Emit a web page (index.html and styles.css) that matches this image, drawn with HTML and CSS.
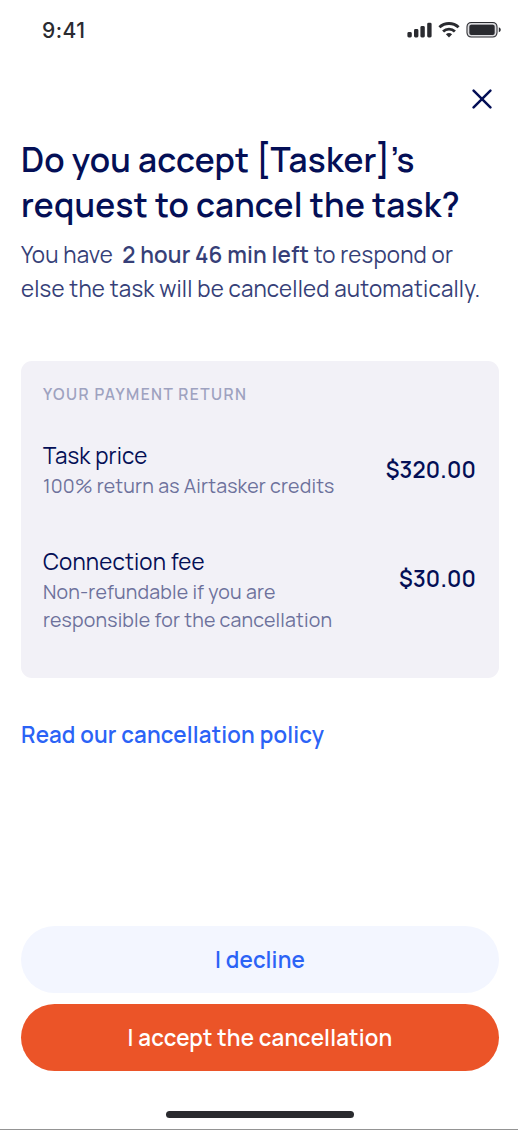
FILE: index.html
```html
<!DOCTYPE html>
<html lang="en">
<head>
    <meta charset="UTF-8">
    <meta name="viewport" content="width=device-width, initial-scale=1.0">
    <title>Cancellation request</title>
    <link rel="stylesheet" href="styles.css">
</head>
<body>
    <div class="screen">
        <div class="status-bar">
            <span class="time">9:41</span>
            <svg class="status-icons" width="96" height="18" viewBox="0 0 96 18" fill="#2a2b30">
                <!-- signal -->
                <rect x="0.4" y="11" width="4.4" height="5.4" rx="1.4"/>
                <rect x="7" y="8" width="4.4" height="8.4" rx="1.4"/>
                <rect x="13.4" y="5" width="4.4" height="11.4" rx="1.4"/>
                <rect x="20.2" y="1.7" width="4.4" height="14.7" rx="1.4"/>
                <!-- wifi -->
                <g fill="none" stroke="#2a2b30" stroke-width="2.9">
                    <path d="M32.4 6.3a14.2 14.2 0 0 1 19.2 0"/>
                    <path d="M36.1 10.5a8.6 8.6 0 0 1 11.8 0"/>
                </g>
                <path d="M38.9 13.3a4.6 4.6 0 0 1 6.2 0L42 16.5z"/>
                <!-- battery -->
                <rect x="60" y="1.5" width="30" height="14.5" rx="4.2" fill="#b5b5b9" stroke="#2a2b30" stroke-width="1.1"/>
                <rect x="61.3" y="2.8" width="27.4" height="11.9" rx="3" fill="none" stroke="#e8e8ea" stroke-width="1"/>
                <rect x="62.4" y="3.7" width="25.2" height="10.2" rx="2"/>
                <path d="M91.8 6.3c2.6.8 2.6 4.2 0 5z"/>
            </svg>
        </div>

        <div class="close-row">
            <button class="close" aria-label="Close">
                <svg width="20" height="20" viewBox="0 0 20 20" fill="none" stroke="#040f56" stroke-width="2.5" stroke-linecap="round">
                    <path d="M1.6 1.6l16.8 16.8M18.4 1.6L1.6 18.4"/>
                </svg>
            </button>
        </div>

        <h1>Do you accept [Tasker]’s<br>request to cancel the task?</h1>
        <p class="lead">You have &nbsp;<b>2 hour 46 min left</b> to respond or<br>else the task will be cancelled automatically.</p>

        <div class="card">
            <h2>YOUR PAYMENT RETURN</h2>
            <div class="item">
                <div class="item-text">
                    <div class="item-name">Task price</div>
                    <div class="item-note">100% return as Airtasker credits</div>
                </div>
                <div class="amount">$320.00</div>
            </div>
            <div class="item">
                <div class="item-text">
                    <div class="item-name">Connection fee</div>
                    <div class="item-note">Non-refundable if you are<br>responsible for the cancellation</div>
                </div>
                <div class="amount">$30.00</div>
            </div>
        </div>

        <a class="policy" href="#">Read our cancellation policy</a>

        <div class="actions">
            <button class="btn decline">I decline</button>
            <button class="btn accept">I accept the cancellation</button>
        </div>

        <div class="home-bar"></div>
    </div>
</body>
</html>
```
FILE: styles.css
```css
* {
    margin: 0;
    padding: 0;
    box-sizing: border-box;
}

body {
    font-family: Manrope, Inter, sans-serif;
    background: #fff;
    color: #040f56;
}

button {
    border: none;
    background: none;
    font-family: inherit;
    cursor: pointer;
}

.screen {
    display: flex;
    flex-direction: column;
    width: 518px;
    height: 1130px;
    padding: 0 19px 0 21px;
    border-bottom: 1px solid #949494;
}

.status-bar {
    display: flex;
    justify-content: space-between;
    align-items: center;
    height: 60px;
    padding-left: 21px;
    margin-right: -4px;
}

.time {
    font-family: Inter, sans-serif;
    font-size: 21px;
    font-weight: 550;
    letter-spacing: 0.5px;
    color: #2a2b30;
}

.close-row {
    display: flex;
    justify-content: flex-end;
    height: 77px;
    padding: 28.5px 7px 0 0;
}

.close {
    width: 20px;
    height: 20px;
}

.close svg {
    display: block;
}

h1 {
    font-size: 33.4px;
    font-weight: 650;
    line-height: 44.5px;
    letter-spacing: 0.25px;
    white-space: nowrap;
}

.lead {
    margin-top: 12.4px;
    font-size: 22.3px;
    line-height: 33.4px;
    letter-spacing: 0.18px;
    color: #363f78;
    white-space: nowrap;
}

.lead b {
    font-weight: 650;
    letter-spacing: 0.15px;
}

.card {
    height: 317px;
    margin-top: 55.6px;
    padding: 22px 23px 0 22px;
    border-radius: 11px;
    background: #f2f1f7;
}

h2 {
    font-size: 15.5px;
    font-weight: 650;
    line-height: 22px;
    letter-spacing: 1.42px;
    color: #9ea2c0;
}

.item {
    display: flex;
    justify-content: space-between;
    align-items: center;
    margin-top: 34px;
    white-space: nowrap;
}

.item + .item {
    margin-top: 45px;
}

.item-name {
    font-size: 22.3px;
    line-height: 33px;
    letter-spacing: 0.16px;
}

.item-note {
    font-size: 19.5px;
    line-height: 28px;
    letter-spacing: 0.18px;
    color: #6d719c;
}

.amount {
    font-size: 22.3px;
    font-weight: 650;
    letter-spacing: 0.2px;
}

/* lines up with the first two text rows */
.item + .item .amount {
    margin-bottom: 22px;
}

.policy {
    margin-top: 40px;
    font-size: 22.3px;
    font-weight: 650;
    line-height: 33px;
    letter-spacing: 0.18px;
    color: #2b63f6;
    text-decoration: none;
}

.actions {
    display: flex;
    flex-direction: column;
    gap: 11px;
    margin-top: auto;
}

.btn {
    height: 67px;
    border-radius: 34px;
    font-size: 22.3px;
    font-weight: 650;
    letter-spacing: 0.17px;
}

.decline {
    background: #f3f6ff;
    color: #2b63f6;
}

.accept {
    background: #eb5428;
    color: #fff;
}

.home-bar {
    width: 188px;
    height: 7px;
    margin: 40px auto 11px;
    border-radius: 4px;
    background: #2a2b2f;
}
```
